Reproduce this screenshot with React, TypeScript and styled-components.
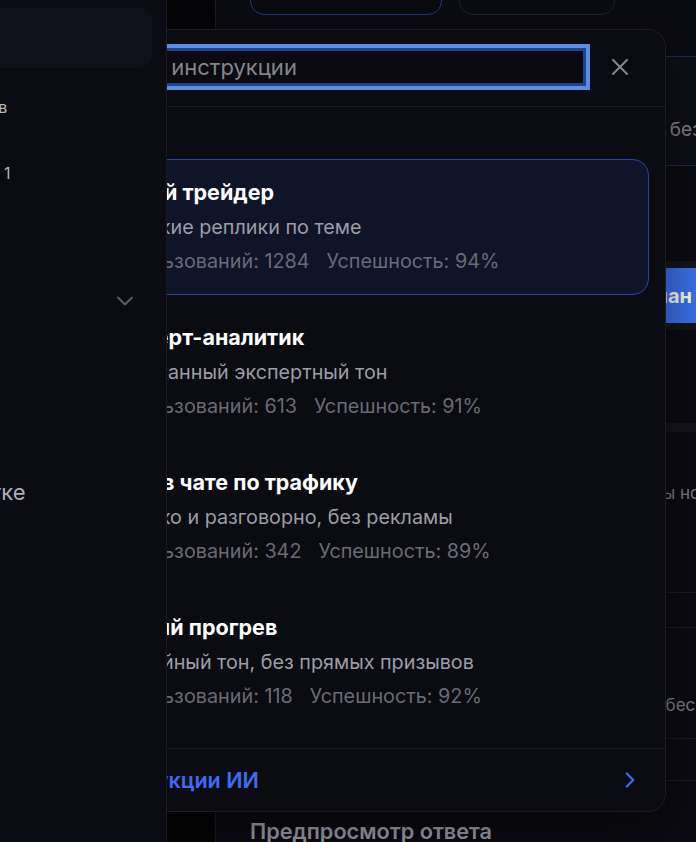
import React from "react";
import styled, { createGlobalStyle } from "styled-components";
import { X, ChevronRight, ChevronDown } from "lucide-react";

type Instruction = {
  title: string;
  description: string;
  uses: number;
  success: number;
};

const instructions: Instruction[] = [
  { title: "Живой трейдер", description: "Короткие реплики по теме", uses: 1284, success: 94 },
  { title: "Эксперт-аналитик", description: "Сдержанный экспертный тон", uses: 613, success: 91 },
  { title: "Свой в чате по трафику", description: "Коротко и разговорно, без рекламы", uses: 342, success: 89 },
  { title: "Мягкий прогрев", description: "Спокойный тон, без прямых призывов", uses: 118, success: 92 },
];

const GlobalStyle = createGlobalStyle`
  * {
    box-sizing: border-box;
  }

  html,
  body {
    margin: 0;
    padding: 0;
    background: #07070b;
  }

  body {
    font-family: Inter, "Noto Sans", sans-serif;
    overflow: hidden;
  }
`;

const Page = styled.div`
  position: relative;
  display: flex;

  width: 696px;
  height: 842px;
  overflow: hidden;
`;

/* sidebar */

const Sidebar = styled.aside`
  position: relative;
  z-index: 2;
  flex-shrink: 0;

  width: 167px;
  height: 100%;
  overflow: hidden;

  background: #0b0b13;
  border-right: 1px solid #1b1b24;
`;

const Nav = styled.nav`
  display: flex;
  flex-direction: column;
  gap: 12px;

  width: 305px;
  margin-left: -139px;
  padding: 8px 14px 0 8px;
`;

const NavItem = styled.div<{ $active?: boolean; $big?: boolean }>`
  display: flex;
  align-items: center;
  justify-content: space-between;

  height: ${(p) => (p.$active ? 60 : 54)}px;
  padding: 0 18px 0 12px;

  border-radius: 14px;
  background: ${(p) => (p.$active ? "#0f1019" : "transparent")};

  font-size: ${(p) => (p.$big ? 22 : 16)}px;
  color: ${(p) => (p.$big ? "#aeaeba" : "#b4b4bd")};
  white-space: nowrap;
`;

const GroupHeader = styled(NavItem)`
  margin-top: 62px;
  padding-right: 13px;
  color: #5e5e6a;
`;

const BottomItem = styled(NavItem)`
  margin-top: 125px;
`;

/* main */

const Main = styled.main`
  display: flex;
  flex: 1;
  min-width: 0;
`;

const Gutter = styled.div`
  flex-shrink: 0;
  width: 48px;
  background: #050507;
`;

const Panel = styled.section`
  flex: 1;
  display: flex;
  flex-direction: column;
  min-width: 0;

  padding-left: 34px;
  overflow: hidden;

  background: #0b0b12;
  border-left: 1px solid #1c1c26;
`;

const Column = styled.div`
  display: flex;
  flex-direction: column;
  width: 560px;
  flex-shrink: 0;
`;

const TabRow = styled.div`
  display: flex;
  gap: 17px;
  margin-top: -30px;
`;

const Tab = styled.div<{ $active?: boolean; $w: number }>`
  width: ${(p) => p.$w}px;
  height: 45px;

  border-radius: 14px;
  border: 1px solid ${(p) => (p.$active ? "#26397e" : "#22232d")};
`;

const OptionBox = styled.div`
  display: flex;
  align-items: center;

  height: 110px;
  margin-top: 41px;
  padding: 36px 16px 0;

  background: #0f0f18;
  border: 1px solid #1e2a58;
  border-radius: 12px;

  font-size: 19px;
  color: #85858f;
  white-space: nowrap;
`;

const PrimaryButton = styled.div`
  display: flex;
  align-items: center;
  justify-content: flex-end;

  height: 55px;
  margin-top: 102px;
  padding-right: 118px;

  background: linear-gradient(90deg, #3758e6, #3f7cf0);
  border-radius: 12px;
  box-shadow: 0 0 0 7px #14141c;

  font-size: 20px;
  font-weight: 700;
  color: #ffffff;
  white-space: nowrap;
`;

const Band = styled.div`
  height: 9px;
  margin-top: 100px;
  background: #15151d;
`;

const MutedText = styled.div<{ $top: number; $indent: number }>`
  margin-top: ${(p) => p.$top}px;
  padding-left: ${(p) => p.$indent}px;

  font-size: 17px;
  line-height: 22px;
  color: #80808b;
  white-space: nowrap;
`;

const LinedRow = styled.div<{ $top: number; $h: number }>`
  height: ${(p) => p.$h}px;
  margin-top: ${(p) => p.$top}px;

  border-top: 1px solid #1c1c25;
  border-bottom: 1px solid #1c1c25;
`;

const PreviewTitle = styled.h3`
  margin: 38px 0 0;

  font-size: 21.7px;
  font-weight: 600;
  line-height: 24px;
  color: #a7a7b2;
  white-space: nowrap;
`;

/* modal */

const Modal = styled.div`
  position: absolute;
  z-index: 1;
  left: 64px;
  top: 29px;

  display: flex;
  flex-direction: column;

  width: 602px;
  height: 783px;

  background: #0b0b12;
  border: 1px solid #1d1d27;
  border-radius: 18px;
  box-shadow: 0 20px 60px rgba(0, 0, 0, 0.5);
`;

const ModalHeader = styled.div`
  display: flex;
  align-items: center;
  gap: 18px;

  padding: 18px 29px 20px 19px;
  border-bottom: 1px solid #1d1d27;
`;

const SearchField = styled.input`
  flex: 1;
  height: 38px;
  padding: 0 11px;

  background: #0a0a10;
  border: 3px solid #27408f;
  border-radius: 0;
  box-shadow: 0 0 0 4px #5a8ee0;
  outline: none;

  font-family: inherit;
  font-size: 22px;
  color: #e6e6ee;

  &::placeholder {
    color: #85858f;
  }
`;

const CloseButton = styled.button`
  display: flex;
  align-items: center;
  justify-content: center;

  width: 32px;
  height: 32px;
  padding: 0;

  background: transparent;
  border: none;
  color: #85858f;
`;

const List = styled.div`
  flex: 1;
  display: flex;
  flex-direction: column;
  gap: 9px;

  padding: 52px 16px 0;
`;

const Card = styled.div<{ $active?: boolean }>`
  height: 136px;
  padding: 19px 20px 0;

  border-radius: 16px;
  border: 1.5px solid ${(p) => (p.$active ? "#2b45a6" : "transparent")};
  background: ${(p) => (p.$active ? "#0f1429" : "transparent")};
`;

const CardTitle = styled.div`
  font-size: 21.5px;
  font-weight: 700;
  line-height: 26px;
  color: #ffffff;
  white-space: nowrap;
`;

const CardDescription = styled.div`
  margin-top: 9px;

  font-size: 19.75px;
  line-height: 26px;
  color: #9d9da8;
  white-space: nowrap;
`;

const CardMeta = styled.div`
  display: flex;
  gap: 17px;
  margin-top: 9px;

  font-size: 19.8px;
  line-height: 24px;
  color: #6a6a77;
  white-space: nowrap;
`;

const ModalFooter = styled.div`
  display: flex;
  align-items: center;
  justify-content: space-between;

  height: 63px;
  padding: 0 22px 0 25px;
  border-top: 1px solid #1d1d27;

  font-size: 21.5px;
  font-weight: 600;
  color: #3d6cf2;
  white-space: nowrap;
`;

export default function App() {
  return (
    <>
      <GlobalStyle />
      <Page>
        <Sidebar>
          <Nav>
            <NavItem $active>Главная</NavItem>
            <NavItem>Список каналов</NavItem>
            <NavItem>Рабочее место 1</NavItem>
            <GroupHeader>
              <span>Ещё</span>
              <ChevronDown size={28} strokeWidth={1.6} />
            </GroupHeader>
            <BottomItem $big>В разработке</BottomItem>
          </Nav>
        </Sidebar>

        <Main>
          <Gutter />
          <Panel>
            <Column>
              <TabRow>
                <Tab $active $w={192} />
                <Tab $w={156} />
              </TabRow>
              <OptionBox>Отвечать коротко, дружелюбно и по делу, без лишних слов</OptionBox>
              <PrimaryButton>Сгенерировать план</PrimaryButton>
              <Band />
              <MutedText $top={50} $indent={262}>Ответы на вопросы новичков</MutedText>
              <LinedRow $top={88} $h={36} />
              <MutedText $top={66} $indent={318}>Только для бесед</MutedText>
              <LinedRow $top={22} $h={43} />
              <PreviewTitle>Предпросмотр ответа</PreviewTitle>
            </Column>
          </Panel>
        </Main>

        <Modal>
          <ModalHeader>
            <SearchField placeholder="Поиск инструкции" readOnly />
            <CloseButton aria-label="Закрыть">
              <X size={28} strokeWidth={1.7} />
            </CloseButton>
          </ModalHeader>
          <List>
            {instructions.map((item, i) => (
              <Card key={item.title} $active={i === 0}>
                <CardTitle>{item.title}</CardTitle>
                <CardDescription>{item.description}</CardDescription>
                <CardMeta>
                  <span>Использований: {item.uses}</span>
                  <span>Успешность: {item.success}%</span>
                </CardMeta>
              </Card>
            ))}
          </List>
          <ModalFooter>
            <span>Инструкции ИИ</span>
            <ChevronRight size={26} strokeWidth={2} />
          </ModalFooter>
        </Modal>
      </Page>
    </>
  );
}
